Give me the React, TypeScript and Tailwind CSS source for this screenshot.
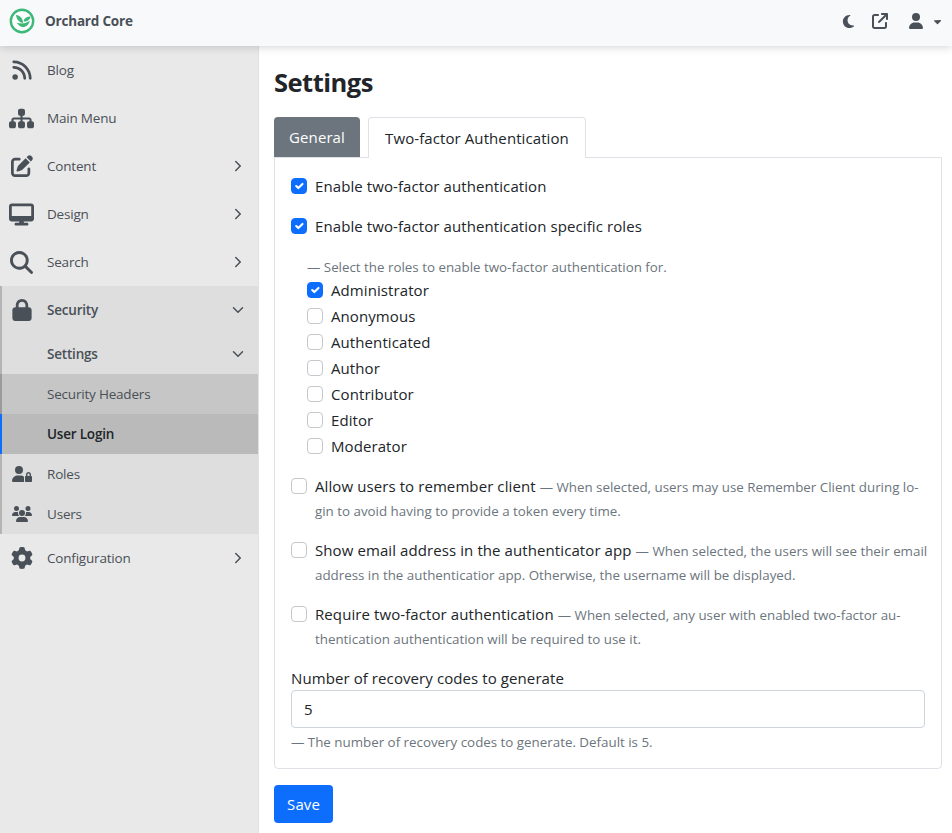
import { FaArrowUpRightFromSquare, FaCaretDown, FaDesktop, FaGear, FaLock, FaMagnifyingGlass, FaMoon, FaPenToSquare, FaRss, FaSitemap, FaUser, FaUserLock, FaUsers } from "react-icons/fa6";
import { ChevronDown, ChevronRight } from "lucide-react";
import { ReactNode } from "react";

const font = "font-['Open_Sans',sans-serif]";

function NavItem({ icon, label, arrow, inGroup, className = "" }: { icon?: ReactNode; label: string; arrow?: "right" | "down"; inGroup?: boolean; className?: string }) {
  return (
    <div className={`flex items-center text-[13.5px] tracking-[-0.2px] text-[#495057] ${className}`}>
      <div className={`flex shrink-0 justify-center text-[22px] text-[#495057] ${inGroup ? "w-[45px] pr-[5px]" : "w-[47px] pr-[4px]"}`}>{icon}</div>
      <span>{label}</span>
      {arrow === "right" ? <ChevronRight className="ml-auto mr-[11px] h-[18px] w-[18px]" strokeWidth={2} /> : null}
      {arrow === "down" ? <ChevronDown className="ml-auto mr-[11px] h-[18px] w-[18px]" strokeWidth={2} /> : null}
    </div>
  );
}

function Check({ checked = false }: { checked?: boolean }) {
  return (
    <span className={`flex h-4 w-4 shrink-0 items-center justify-center rounded-[4px] border ${checked ? "border-[#0d6efd] bg-[#0d6efd]" : "border-[#c4c8cc] bg-white"}`}>
      {checked ? (
        <svg viewBox="0 0 20 20" className="h-4 w-4" fill="none">
          <path d="M6 10l3 3l6-6" stroke="#fff" strokeWidth="3" strokeLinecap="round" strokeLinejoin="round" />
        </svg>
      ) : null}
    </span>
  );
}

function Role({ label, checked }: { label: string; checked?: boolean }) {
  return (
    <div className="flex h-[26px] items-center gap-2">
      <Check checked={checked} />
      <span>{label}</span>
    </div>
  );
}

function Option({ label, hint, second }: { label: string; hint: string; second: string }) {
  return (
    <div className="flex gap-2">
      <div className="pt-1"><Check /></div>
      <div>
        <div className="whitespace-nowrap">
          {label} <span className="text-[13.35px] tracking-normal text-[#6c757d]">— {hint}</span>
        </div>
        <div className="mt-[1px] text-[13.35px] leading-[22px] tracking-normal text-[#6c757d]">{second}</div>
      </div>
    </div>
  );
}

export default function App() {
  return (
    <div className={`flex h-[833px] w-[952px] flex-col overflow-hidden bg-white ${font}`}>
      <header className="relative z-10 flex h-[46px] shrink-0 items-center bg-[#f8f9fb] pb-1 pl-[9px] pr-[9px] shadow-[0_2px_8px_rgba(0,0,0,0.15)]">
        <svg viewBox="0 0 26 26" className="h-[26px] w-[26px]">
          <circle cx="13" cy="13" r="11.2" fill="#fff" stroke="#3cb878" strokeWidth="2.4" />
          <path d="M7 7c4 .5 7 3.500 7 8c-3.500-.5-6.500-3.500-7-8z" fill="#3cb878" />
          <path d="M21.500 8.500c-3.500 0-6.500 1.500-7 5c3.500 .3 6.500-1.500 7-5z" fill="#3cb878" />
          <path d="M7.500 14.500c2 3 4.500 5 7.500 4.500c3-.5 5-3 6-6.500c-2 1.500-4 2.500-6 2.800c-2.500 .2-5.500 .2-7.500-.8z" fill="#3cb878" />
        </svg>
        <span className="ml-[10px] text-[13.5px] font-bold tracking-[-0.2px] text-[#495057]">Orchard Core</span>
        <div className="ml-auto flex items-center text-[#495057]">
          <FaMoon className="text-[15px]" />
          <FaArrowUpRightFromSquare className="ml-[16px] text-[16px]" />
          <FaUser className="ml-[20px] text-[16px]" />
          <FaCaretDown className="ml-[8px] text-[11px]" />
        </div>
      </header>
      <div className="flex min-h-0 flex-1">
        <aside className="w-[259px] shrink-0 border-r border-[#dee2e6] bg-[#e9e9e9]">
          <NavItem icon={<FaRss />} label="Blog" className="h-12" />
          <NavItem icon={<FaSitemap className="text-[25px]" />} label="Main Menu" className="h-12" />
          <NavItem icon={<FaPenToSquare />} label="Content" arrow="right" className="h-12" />
          <NavItem icon={<FaDesktop className="text-[25px]" />} label="Design" arrow="right" className="h-12" />
          <NavItem icon={<FaMagnifyingGlass className="text-[23px]" />} label="Search" arrow="right" className="h-12" />
          <div className="border-l-2 border-[#b4b4b4] bg-[#dedede]">
            <NavItem inGroup icon={<FaLock />} label="Security" arrow="down" className="h-12 font-semibold" />
            <NavItem inGroup label="Settings" arrow="down" className="h-10 font-semibold" />
            <div className="-ml-[2px] border-l-2 border-[#9a9a9a] bg-[#c6c6c6]">
              <NavItem inGroup label="Security Headers" className="h-10" />
            </div>
            <div className="-ml-[2px] border-l-2 border-[#0d6efd] bg-[#bababa]">
              <NavItem inGroup label="User Login" className="h-10 font-semibold !text-[#212529]" />
            </div>
            <NavItem inGroup icon={<FaUserLock className="text-[20px]" />} label="Roles" className="h-10" />
            <NavItem inGroup icon={<FaUsers className="text-[20px]" />} label="Users" className="h-10" />
          </div>
          <NavItem icon={<FaGear />} label="Configuration" arrow="right" className="h-12" />
        </aside>
        <main className="min-w-0 flex-1 pl-[15px] pr-[10px] text-[15px] tracking-[0.09px] text-[#212529]">
          <h1 className="mt-[19px] h-[52px] text-[25.5px] font-bold leading-[34px] tracking-[-0.5px]">Settings</h1>
          <div className="flex items-end gap-2">
            <div className="flex h-10 w-[86px] items-center justify-center rounded-t-[4px] bg-[#6c757d] text-white">General</div>
            <div className="-mb-px flex h-[41px] w-[218px] items-center justify-center rounded-t-[4px] border border-b-0 border-[#dee2e6] bg-white">Two-factor Authentication</div>
          </div>
          <section className="h-[612px] rounded-b-[4px] border border-[#dee2e6] px-4 pt-[16px]">
            <div className="flex h-6 items-center gap-2"><Check checked /><span>Enable two-factor authentication</span></div>
            <div className="mt-4 flex h-6 items-center gap-2"><Check checked /><span>Enable two-factor authentication specific roles</span></div>
            <div className="ml-4 mt-[19px]">
              <div className="text-[13.35px] tracking-normal text-[#6c757d]">— Select the roles to enable two-factor authentication for.</div>
              <Role label="Administrator" checked />
              <Role label="Anonymous" />
              <Role label="Authenticated" />
              <Role label="Author" />
              <Role label="Contributor" />
              <Role label="Editor" />
              <Role label="Moderator" />
            </div>
            <div className="mt-[15px] space-y-[16px] leading-6">
              <Option label="Allow users to remember client" hint="When selected, users may use Remember Client during lo-" second="gin to avoid having to provide a token every time." />
              <Option label="Show email address in the authenticator app" hint="When selected, the users will see their email" second="address in the authenticatior app. Otherwise, the username will be displayed." />
              <Option label="Require two-factor authentication" hint="When selected, any user with enabled two-factor au-" second="thentication authentication will be required to use it." />
            </div>
            <label className="mt-[16px] block leading-6">Number of recovery codes to generate</label>
            <div className="flex h-[38px] items-center rounded-[4px] border border-[#ced4da] px-3">5</div>
            <div className="mt-[4px] text-[13.35px] tracking-normal text-[#6c757d]">— The number of recovery codes to generate. Default is 5.</div>
          </section>
          <button className="mt-4 h-[38px] w-[59px] rounded-[4px] bg-[#0d6efd] text-white">Save</button>
        </main>
      </div>
    </div>
  );
}
